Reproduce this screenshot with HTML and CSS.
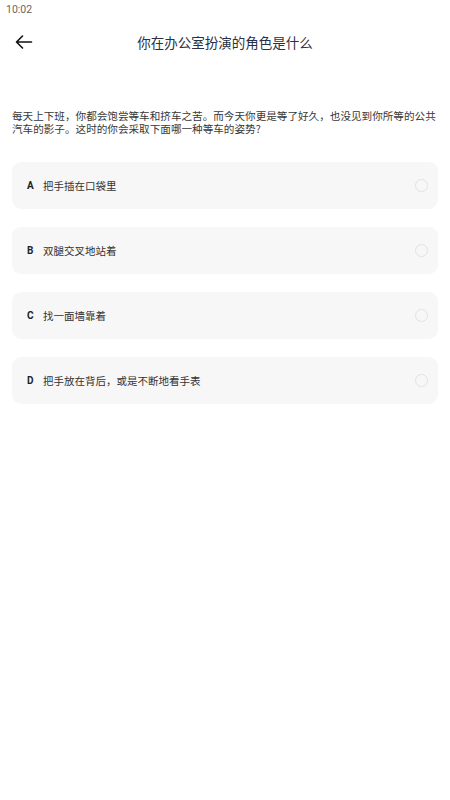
FILE: index.html
```html
<!DOCTYPE html>
<html lang="zh">
<head>
  <meta charset="UTF-8">
  <title>你在办公室扮演的角色是什么</title>
  <link rel="stylesheet" href="styles.css">
</head>
<body>
  <div class="status-bar">10:02</div>
  <header class="top-bar">
    <span class="back">
      <svg width="18" height="14" viewBox="0 0 18 14" fill="none" stroke="#111" stroke-width="1.6" stroke-linecap="round" stroke-linejoin="round">
        <path d="M16.5 7H1.5M7.5 1L1.5 7L7.5 13"/>
      </svg>
    </span>
    <h1>你在办公室扮演的角色是什么</h1>
  </header>
  <main>
    <p class="question">每天上下班，你都会饱尝等车和挤车之苦。而今天你更是等了好久，也没见到你所等的公共汽车的影子。这时的你会采取下面哪一种等车的姿势?</p>
    <div class="options">
      <div class="option"><span class="letter">A</span><span class="text">把手插在口袋里</span><span class="radio"></span></div>
      <div class="option"><span class="letter">B</span><span class="text">双腿交叉地站着</span><span class="radio"></span></div>
      <div class="option"><span class="letter">C</span><span class="text">找一面墙靠着</span><span class="radio"></span></div>
      <div class="option"><span class="letter">D</span><span class="text">把手放在背后，或是不断地看手表</span><span class="radio"></span></div>
    </div>
  </main>
</body>
</html>
```

FILE: styles.css
```css
body {
  margin: 0;
  background: #fff;
  font-family: "Noto Sans CJK SC", Roboto, sans-serif;
  color: #333;
}
.status-bar {
  height: 19px;
  padding-left: 6px;
  font-family: Roboto, sans-serif;
  font-size: 10.5px;
  line-height: 19px;
  color: #666;
}
.top-bar {
  position: relative;
  height: 46px;
  display: flex;
  align-items: center;
  justify-content: center;
}
.back {
  position: absolute;
  left: 15px;
  top: 16px;
  display: flex;
}
.top-bar h1 {
  margin: 0;
  font-size: 13.5px;
  font-weight: 400;
  color: #2a3045;
}
main {
  padding: 0 12px;
}
.question {
  margin: 45px 0 27px;
  font-size: 10.6px;
  line-height: 12.5px;
  color: #383838;
}
.options {
  display: flex;
  flex-direction: column;
  gap: 18px;
}
.option {
  height: 47px;
  display: flex;
  align-items: center;
  padding: 0 10px 0 15px;
  background: #f7f7f7;
  border-radius: 9px;
}
.letter {
  width: 16px;
  font-family: Roboto, sans-serif;
  font-weight: 700;
  font-size: 10px;
  color: #222;
}
.text {
  flex: 1;
  font-size: 10.5px;
  color: #333;
}
.radio {
  width: 11px;
  height: 11px;
  border: 1px solid #e2e2e2;
  border-radius: 50%;
}
```
